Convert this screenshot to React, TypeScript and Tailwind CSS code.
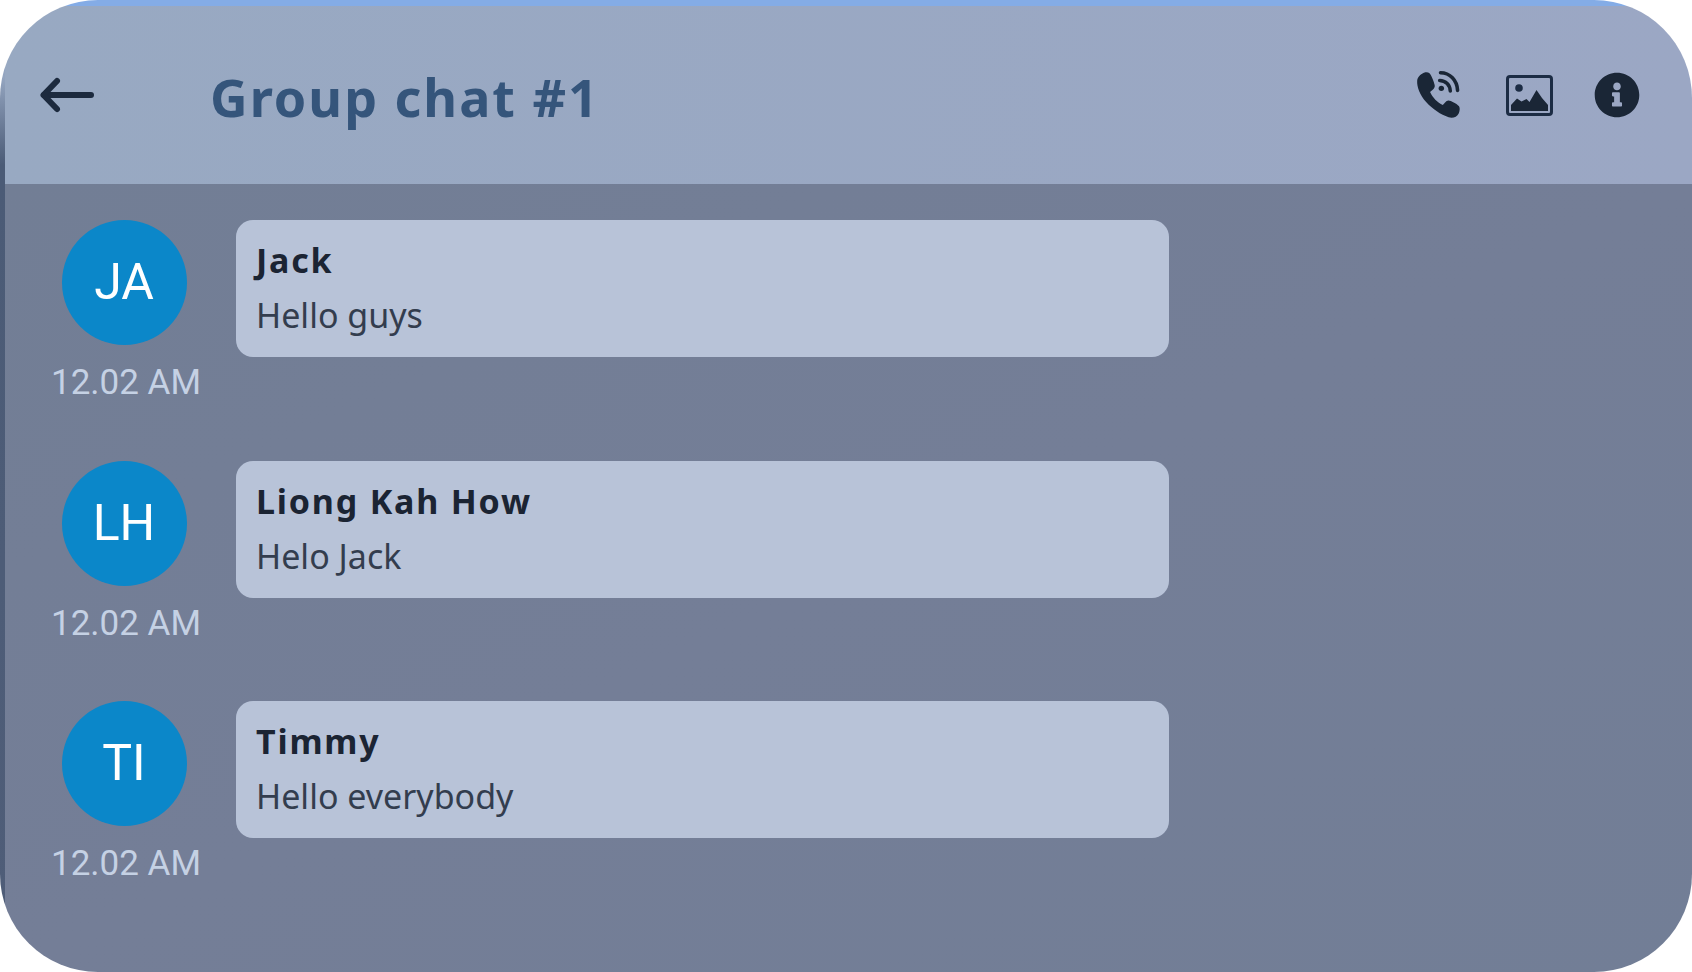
import { FaInfoCircle } from "react-icons/fa";

const messages = [
  { initials: "JA", name: "Jack", text: "Hello guys" },
  { initials: "LH", name: "Liong Kah How", text: "Helo Jack" },
  { initials: "TI", name: "Timmy", text: "Hello everybody" },
];

function BackArrow() {
  return (
    <svg width="56" height="38" viewBox="0 0 56 38" fill="none" stroke="#1c2a3e" strokeWidth="6" strokeLinecap="round" strokeLinejoin="round">
      <path d="M52 19H5" />
      <path d="M18 5 4.500 19 18 33" />
    </svg>
  );
}

function CallIcon() {
  return (
    <svg width="50" height="50" viewBox="0 0 24 24" fill="none">
      <path
        d="M5.800 1.200c-1.500.3-3.700 1.900-3.800 4-.2 3 1.400 7 4.300 10.200 3.200 3.500 7 6 10.800 7.300 1.900.5 4 0 4.900-2 .5-1.300.6-2.500.1-3.300-.4-.7-3-2.400-4.600-2.700-.9-.2-1.500.2-2.100.9l-1.100 1.200c-2.500-1.100-5-3.800-6.100-6.300l1.400-1.200c.7-.6 1-1.300.8-2.100-.3-1.600-1.700-5-2.500-5.700-.5-.4-1.400-.5-2.500-.3z"
        fill="#1a2636"
      />
      <circle cx="13.600" cy="8.800" r="1.300" fill="#1a2636" />
      <path d="M12.800 5c2.900 0 5 2.200 5.100 5.100" stroke="#1a2636" strokeWidth="1.700" strokeLinecap="round" />
      <path d="M13.200 1.300c4.500 0 8 3.600 8.200 8.500" stroke="#1a2636" strokeWidth="1.700" strokeLinecap="round" />
    </svg>
  );
}

function ImageIcon() {
  return (
    <svg width="47" height="41" viewBox="0 0 47 41">
      <rect x="1.500" y="1.500" width="44" height="38" rx="2.500" fill="none" stroke="#1c2c44" strokeWidth="3" />
      <circle cx="13" cy="13" r="3.800" fill="#1c2c44" />
      <path d="M5 36v-6l6-6.500 4.500 3 5-2.500 3 3 7-12 5.500 8 6 7v6z" fill="#1a2636" />
    </svg>
  );
}

export default function App() {
  return (
    <div className="w-[1692px] h-[972px] bg-white">
      <div className="flex h-full overflow-hidden rounded-[98px] font-['Noto_Sans',sans-serif]">
        <div className="w-[5px] shrink-0 bg-gradient-to-b from-[#94a5c0] from-[8%] via-[#4b5b76] via-[17%] to-[#4f5d78]"></div>

        <div className="flex-1 flex flex-col min-w-0">
          {/* Header */}
          <div className="h-[6px] bg-[#84ace6]"></div>
          <header className="h-[178px] flex items-center bg-gradient-to-r from-[#98a9c2] to-[#9ba7c4] pl-[34px] pr-[52px]">
            <BackArrow />
            <h1 className="ml-[115px] mt-[4px] text-[52px] font-bold tracking-[2px] text-[#35557b]">Group chat #1</h1>
            <div className="ml-auto flex items-center gap-[41px] text-[#1a2636]">
              <div className="-translate-x-[2px]">
                <CallIcon />
              </div>
              <ImageIcon />
              <FaInfoCircle className="w-[46px] h-[46px]" />
            </div>
          </header>

          {/* Messages */}
          <main className="flex-1 flex flex-col gap-[103.500px] pt-[36px] pl-[40px] bg-gradient-to-br from-[#727e95] via-[#747e97] to-[#727e96]">
            {messages.map((m) => (
              <div key={m.initials} className="flex items-start h-[137px]">
                <div className="w-[158px] flex flex-col items-center shrink-0">
                  <div className="w-[125px] h-[125px] rounded-full bg-[#0b87c9] flex items-center justify-center text-[50px] text-white font-['Roboto',sans-serif]">
                    {m.initials}
                  </div>
                  <div className="mt-[16px] ml-[4px] text-[35px] leading-[44px] whitespace-nowrap text-[#c5d1e4] font-['Roboto',sans-serif]">12.02 AM</div>
                </div>
                <div className="ml-[33px] w-[933px] h-[137px] rounded-[17px] bg-[#b8c3d8] pl-[20px] pt-[18px]">
                  <div className="text-[34px] leading-[44px] font-bold tracking-[1.800px] text-[#1b2433]">{m.name}</div>
                  <div className="mt-[11px] text-[34px] leading-[44px] text-[#333d4e]">{m.text}</div>
                </div>
              </div>
            ))}
          </main>
        </div>
      </div>
    </div>
  );
}
